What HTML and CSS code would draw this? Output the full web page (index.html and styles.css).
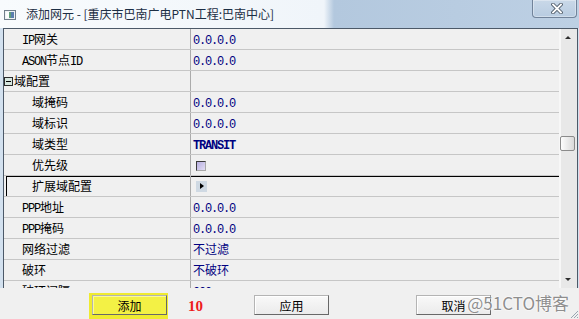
FILE: index.html
```html
<!DOCTYPE html>
<html lang="zh-CN">
<head>
    <meta charset="UTF-8">
    <title>添加网元</title>
    <link rel="stylesheet" href="styles.css">
</head>
<body>
<div class="window">
    <div class="titlebar">
        <svg class="app-icon" width="12" height="10" viewBox="0 0 12 10">
            <rect x="0.5" y="0.5" width="11" height="9" fill="#eef2f4" stroke="#6f7e8a"/>
            <rect x="2" y="2" width="3" height="6" fill="#fafcfc"/>
            <rect x="5" y="2" width="2" height="6" fill="#5f9e7a"/>
            <rect x="7" y="2" width="3" height="6" fill="#5b7fae"/>
        </svg>
        <span class="title">添加网元 - [重庆市巴南广电PTN工程:巴南中心]</span>
        <div class="close-btn">
            <svg width="12" height="11" viewBox="0 0 12 11">
                <path d="M2 1.5 L10 9.5 M10 1.5 L2 9.5" stroke="#4d5a68" stroke-width="3.6" stroke-linecap="square"/>
                <path d="M2 1.5 L10 9.5 M10 1.5 L2 9.5" stroke="#ffffff" stroke-width="1.8" stroke-linecap="square"/>
            </svg>
        </div>
    </div>

    <div class="main">
        <div class="grid">
            <div class="rows">
                <div class="row">
                    <div class="name"><span class="en">IP</span>网关</div>
                    <div class="value"><span class="en">0.0.0.0</span></div>
                </div>
                <div class="row">
                    <div class="name"><span class="en">ASON</span>节点<span class="en">ID</span></div>
                    <div class="value"><span class="en">0.0.0.0</span></div>
                </div>
                <div class="row group">
                    <div class="name"><span class="toggle"></span>域配置</div>
                    <div class="value"></div>
                </div>
                <div class="row sub">
                    <div class="name">域掩码</div>
                    <div class="value"><span class="en">0.0.0.0</span></div>
                </div>
                <div class="row sub">
                    <div class="name">域标识</div>
                    <div class="value"><span class="en">0.0.0.0</span></div>
                </div>
                <div class="row sub">
                    <div class="name">域类型</div>
                    <div class="value"><span class="en bold">TRANSIT</span></div>
                </div>
                <div class="row sub">
                    <div class="name">优先级</div>
                    <div class="value"><span class="check"></span></div>
                </div>
                <div class="row sub selected">
                    <div class="name">扩展域配置</div>
                    <div class="value"><span class="expand"></span></div>
                </div>
                <div class="row">
                    <div class="name"><span class="en">PPP</span>地址</div>
                    <div class="value"><span class="en">0.0.0.0</span></div>
                </div>
                <div class="row">
                    <div class="name"><span class="en">PPP</span>掩码</div>
                    <div class="value"><span class="en">0.0.0.0</span></div>
                </div>
                <div class="row">
                    <div class="name">网络过滤</div>
                    <div class="value">不过滤</div>
                </div>
                <div class="row">
                    <div class="name">破环</div>
                    <div class="value">不破环</div>
                </div>
                <div class="row">
                    <div class="name">破环间隔</div>
                    <div class="value"><span class="en">000</span></div>
                </div>
            </div>
            <div class="scrollbar">
                <div class="arrow-box"><span class="arrow up"></span></div>
                <div class="track"><div class="thumb"></div></div>
                <div class="arrow-box"><span class="arrow down"></span></div>
            </div>
        </div>
    </div>

    <div class="footer">
        <div class="highlight"><button class="btn btn-yellow">添加</button></div>
        <span class="count">10</span>
        <button class="btn btn-apply">应用</button>
        <button class="btn btn-cancel">取消</button>
        <span class="watermark">@51CTO博客</span>
        <svg class="grip" width="9" height="9" viewBox="0 0 9 9">
            <path d="M8 1 L1 8 M8 4 L4 8 M8 7 L7 8" stroke="#9aa6b2" stroke-width="1"/>
        </svg>
    </div>
</div>
</body>
</html>
```

FILE: styles.css
```css
* {
    box-sizing: border-box;
    margin: 0;
    padding: 0;
}

body {
    width: 579px;
    height: 319px;
    overflow: hidden;
    font-family: "Noto Sans CJK SC", sans-serif;
    font-size: 12px;
}

.window {
    width: 579px;
    height: 319px;
    display: flex;
    flex-direction: column;
    background: #f0f0f0;
    position: relative;
}

/* title bar */
.titlebar {
    height: 28px;
    flex-shrink: 0;
    display: flex;
    align-items: center;
    background: linear-gradient(to right, #f8fbfd 0, #f0f5fa 324px, #b3c8de 334px, #bdd0e4 100%);
}

.app-icon {
    margin-left: 4px;
    margin-top: 1px;
}

.title {
    margin-left: 10px;
    color: #1c2e44;
    line-height: 16px;
    white-space: nowrap;
}

.close-btn {
    align-self: flex-start;
    margin-left: auto;
    margin-right: 2px;
    width: 45px;
    height: 18px;
    padding-left: 5px;
    border: 1px solid #71839a;
    border-top: none;
    border-radius: 0 0 4px 4px;
    background: linear-gradient(#c9d8e8, #b8cce1);
    box-shadow: inset 0 0 0 1px rgba(255, 255, 255, 0.35);
    display: flex;
    align-items: center;
    justify-content: center;
}

/* property grid */
.main {
    height: 260px;
    flex-shrink: 0;
    display: flex;
    padding-left: 3px;
    padding-right: 1px;
    background: #d3e1ef;
}

.grid {
    flex: 1;
    display: flex;
    border: 1px solid #4c5968;
    border-bottom: none;
    background: #f0f0f0;
}

.rows {
    flex: 1;
    overflow: hidden;
}

.row {
    display: flex;
    height: 21px;
    border-bottom: 1px solid #c6c6c6;
    color: #000;
}

.name {
    width: 187px;
    flex-shrink: 0;
    padding-left: 18px;
    border-right: 1px solid #ababab;
    line-height: 20px;
    white-space: nowrap;
}

.row.sub .name {
    padding-left: 28px;
}

.row.group .name {
    padding-left: 0;
}

.row.selected {
    box-shadow: inset 0 1px 0 #000;
}

.row.selected .name {
    box-shadow: inset 2px 0 0 #f0f0f0, inset 3px 0 0 #000;
}

.value {
    flex: 1;
    padding-left: 2px;
    line-height: 20px;
    color: #000080;
    white-space: nowrap;
}

.en {
    font-family: "Liberation Mono", monospace;
    font-size: 12px;
    letter-spacing: -1.2px;
}

.bold {
    font-weight: bold;
}

.toggle {
    display: inline-block;
    vertical-align: middle;
    width: 9px;
    height: 9px;
    margin: -2px 1px 0 0;
    border: 1px solid #2a2a2a;
    background: #d6e6df;
    position: relative;
}

.toggle::after {
    content: "";
    position: absolute;
    left: 1px;
    top: 3px;
    width: 5px;
    height: 1px;
    background: #000;
}

.check {
    display: inline-block;
    vertical-align: middle;
    width: 10px;
    height: 10px;
    margin: -2px 0 0 3px;
    border: 1px solid;
    border-color: #3c3c3c #a8a8a8 #a8a8a8 #3c3c3c;
    background: linear-gradient(135deg, #b7aee0, #e2ddf4);
}

.expand {
    display: inline-block;
    vertical-align: middle;
    width: 11px;
    height: 11px;
    margin: -2px 0 0 3px;
    background: #cfd9e3;
    position: relative;
}

.expand::after {
    content: "";
    position: absolute;
    left: 4px;
    top: 2px;
    border-top: 3.5px solid transparent;
    border-bottom: 3.5px solid transparent;
    border-left: 4px solid #000;
}

/* scrollbar */
.scrollbar {
    width: 18px;
    flex-shrink: 0;
    display: flex;
    flex-direction: column;
    background: linear-gradient(to right, #f7f7f7 0, #f7f7f7 2px, #e8e8e8 2px);
}

.arrow-box {
    height: 17px;
    display: flex;
    align-items: center;
    justify-content: center;
}

.arrow {
    width: 0;
    height: 0;
    border-left: 3.5px solid transparent;
    border-right: 3.5px solid transparent;
}

.arrow.up {
    border-bottom: 3.5px solid #2e2e2e;
}

.arrow.down {
    border-top: 3.5px solid #2e2e2e;
}

.track {
    flex: 1;
}

.thumb {
    width: 15px;
    height: 15px;
    margin-top: 90px;
    margin-left: 1px;
    border: 1px solid #8b8b8b;
    border-radius: 2px;
    background: linear-gradient(to right, #fdfdfd, #d9d9d9);
}

/* buttons */
.footer {
    flex: 1;
    display: flex;
    align-items: flex-start;
    padding-top: 5px;
    position: relative;
    background: #f0f0f0;
}

.highlight {
    margin-left: 89px;
    padding: 2px 1px 4px 3px;
    background: #efeb30;
}

.btn {
    width: 75px;
    height: 20px;
    font-family: "Noto Sans CJK SC", sans-serif;
    font-size: 12px;
    color: #000;
    border: 1px solid;
    border-color: #b4b4b4 #686868 #686868 #b4b4b4;
    background: linear-gradient(#f9f9f9, #ebebeb);
    box-shadow: inset 1px 1px 0 #fff;
}

.btn-yellow {
    background: #f3f145;
    box-shadow: inset 1px 1px 0 #fafa9a;
}

.btn-apply {
    margin-top: 2px;
    margin-left: 20px;
}

.btn-cancel {
    margin-top: 2px;
    margin-left: 87px;
}

.count {
    width: 46px;
    margin-left: 20px;
    margin-top: 3px;
    font-family: "Liberation Serif", serif;
    font-size: 15px;
    font-weight: bold;
    color: #ee1c1c;
    line-height: 20px;
}

.watermark {
    position: absolute;
    right: 10px;
    top: 4px;
    font-size: 17px;
    color: #8e8e8e;
    line-height: 22px;
    text-shadow: 0 0 2px #fff, 0 0 2px #fff, 0 0 1px #fff;
}

.grip {
    position: absolute;
    right: 0;
    bottom: 0;
}
```
